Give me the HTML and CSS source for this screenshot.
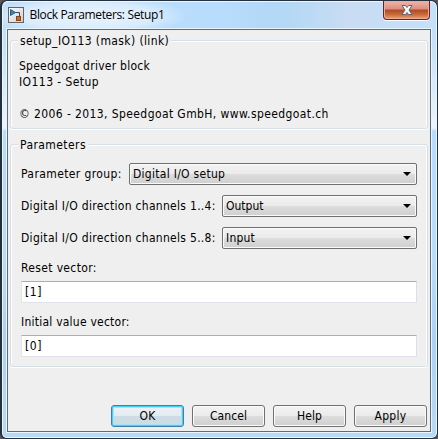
FILE: index.html
```html
<!DOCTYPE html>
<html lang="en">
<head>
<meta charset="utf-8">
<title>Block Parameters: Setup1</title>
<link rel="stylesheet" href="styles.css">
</head>
<body>
<main class="window">
  <header class="titlebar">
    <svg class="app-icon" width="16" height="16" viewBox="0 0 16 16">
      <defs><linearGradient id="paper" x2="1" y2="1"><stop offset="0" stop-color="#fff"/><stop offset="1" stop-color="#cbcbcb"/></linearGradient></defs>
      <rect x=".5" y=".5" width="15" height="15" fill="url(#paper)" stroke="#65625f"/>
      <path d="M7 5.500h4.500V9" fill="none" stroke="#354758"/>
      <path d="M2.500 2.500 7.500 5.500 2.500 8.500Z" fill="#3c83bd" stroke="#245f92"/>
      <rect x="8.500" y="9.500" width="4" height="4" fill="#c8692b" stroke="#84451f"/>
    </svg>
    <h1 class="title">Block Parameters: Setup1</h1>
    <button class="close" aria-label="Close">
      <svg width="12" height="12" viewBox="0 0 12 12"><path d="M1 1.500H4.500L6 3.500 7.500 1.500H11L8 6 11 10.500H7.500L6 8.500 4.500 10.500H1L4 6Z" fill="#f8f8f8" stroke="#5c6573"/></svg>
    </button>
  </header>
  <section class="client">
    <section class="group mask">
      <h2 class="legend"><span class="t-mask">setup_IO113 (mask) (link)</span></h2>
      <p class="t-driver">Speedgoat driver block</p>
      <p class="t-setup">IO113 - Setup</p>
      <p class="copyright">© 2006 - 2013, Speedgoat GmbH, www.speedgoat.ch</p>
    </section>
    <section class="group params">
      <h2 class="legend"><span class="t-params">Parameters</span></h2>
      <div class="row"><span class="label t-group">Parameter group:</span><div class="select"><span class="t-io">Digital I/O setup</span><i class="arrow"></i></div></div>
      <div class="row"><span class="label t-dir">Digital I/O direction channels 1..4:</span><div class="select"><span class="t-output">Output</span><i class="arrow"></i></div></div>
      <div class="row"><span class="label t-dir">Digital I/O direction channels 5..8:</span><div class="select"><span class="t-input">Input</span><i class="arrow"></i></div></div>
      <div class="field"><span class="label t-reset">Reset vector:</span><div class="input">[1]</div></div>
      <div class="field"><span class="label t-initial">Initial value vector:</span><div class="input">[0]</div></div>
    </section>
    <footer class="actions">
      <button class="button primary">OK</button>
      <button class="button">Cancel</button>
      <button class="button">Help</button>
      <button class="button apply">Apply</button>
    </footer>
  </section>
</main>
</body>
</html>
```
FILE: styles.css
```css
* { box-sizing: border-box; }
html { background: #5b5355; }
body {
  margin: 0;
  font: 12px/16px "DejaVu Sans Condensed", "DejaVu Sans", sans-serif;
  font-stretch: condensed;
  color: #000;
  white-space: nowrap;
}
h1, h2, p { margin: 0; font-size: inherit; font-weight: normal; }
.window {
  width: 438px;
  height: 439px;
  padding: 0 6px 5px 5px;
  border: 1px solid #24303e;
  border-left-width: 2px;
  border-radius: 7px 7px 6px 6px;
  box-shadow: inset 0 0 0 1px #e8f8ff;
  background: linear-gradient(180deg, #b9dafa 0, #c9e2fa 50px, #eef4fc 127px, #b7dcff 130px, #b9dcfb 260px, #acd1f3 340px, #b9daf6 100%);
}
.titlebar {
  display: flex;
  height: 28px;
  margin: 0 -5px 0 -4px;
  padding: 0 6px 0 5px;
  border-top: 1px solid #e8f8ff;
  border-radius: 6px 6px 0 0;
  background:
    radial-gradient(ellipse 100px 20px at 85px 14px, #e9f4fd 0, #e1f0fdcc 65%, #d5eafd00 100%),
    linear-gradient(90deg, #c1ddf8 0, #b7dcfd 50%, #b3d8f5 65%, #c9dcf3 80%, #c4e0fa 100%);
}
.app-icon { margin: 5px 0 0; }
.title {
  margin: 4px 0 0 5.5px;
  font: 12px/18px "Open Sans", sans-serif;
  letter-spacing: -.36px;
}
.close {
  display: grid;
  place-items: center;
  width: 47px;
  height: 19px;
  margin: -1px 0 0 auto;
  padding: 0;
  border: 1px solid #62242b;
  border-top: 0;
  border-radius: 0 0 4px 4px;
  background: linear-gradient(#eeb8ad 0, #dc8c7b 45%, #ad472d 50%, #c86b35 75%, #eba576 100%);
  box-shadow: inset 0 0 0 1px #f2aa98, 0 1px 1px #fff;
}
.client {
  height: 403px;
  padding: 9px 2px 0;
  border: 1px solid #596d7b;
  box-shadow: 0 0 0 1px #e8f7ff;
  background: #efefef;
}
.group {
  border: 1px solid #d5dfe5;
  border-radius: 3px;
  box-shadow: inset 1px 1px #fff, 0 1px #fff, inset -1px 0 #fff;
}
.legend { height: 16px; margin: -8px 0 0 7px; }
.legend span { display: inline-block; padding: 0 2px; background: #efefef; }
.mask { height: 89px; margin-top: 1px; }
.mask p { margin-left: 8px; }
.mask .t-driver { margin-top: 9px; }
.mask .copyright { margin-top: 16px; }
.t-mask { letter-spacing: .38px; }
.t-driver { letter-spacing: .25px; }
.t-setup { letter-spacing: .43px; }
.copyright { letter-spacing: .4px; }
.t-params { letter-spacing: .42px; }
.t-group { letter-spacing: .4px; }
.t-dir { letter-spacing: .3px; }
.t-io { letter-spacing: .28px; }
.t-input { letter-spacing: .2px; }
.t-reset { letter-spacing: .35px; }
.t-initial { letter-spacing: .23px; }
.params { height: 223px; margin-top: 15px; padding: 0 10px; }
.params .legend { margin-left: -3px; margin-bottom: 10px; }
.row { display: flex; justify-content: space-between; height: 22px; margin-bottom: 10px; }
.label { line-height: 22px; }
.select {
  display: flex;
  align-items: center;
  justify-content: space-between;
  width: 195px;
  padding: 0 5px 0 3px;
  border: 1px solid #707070;
  border-radius: 2px;
  background: linear-gradient(#f3f3f3 0, #ebebeb 49%, #dddddd 51%, #cfcfcf 100%);
  box-shadow: inset 0 0 0 1px #fafafa;
}
.row:nth-of-type(1) .select { width: 288px; }
.arrow { border: 4px solid transparent; border-top-color: #000; border-bottom: 0; }
.field { height: 54px; }
.field .label { display: block; height: 22px; line-height: 18px; }
.input {
  height: 22px;
  padding: 2px 3px;
  border: 1px solid #e2e3ea;
  border-top-color: #abadb3;
  border-right-color: #dbdfe6;
  border-radius: 1px;
  background: #fff;
  letter-spacing: .6px;
}
.actions { display: flex; justify-content: flex-end; gap: 8px; margin: 38px 1px 0 0; }
.button {
  width: 73px;
  height: 22px;
  padding: 0;
  border: 1px solid #707070;
  border-radius: 3px;
  background: linear-gradient(#f3f3f3 0, #ebebeb 49%, #dddddd 51%, #cfcfcf 100%);
  box-shadow: inset 0 0 0 1px #fbfbfb;
  font: inherit;
  letter-spacing: .1px;
  color: #000;
}
.apply { letter-spacing: .3px; }
.primary {
  border-color: #3c7fb1;
  background: linear-gradient(#edf3f7 0, #e3ebf1 49%, #ccdbe4 51%, #cfdce3 100%);
  box-shadow: inset 0 0 0 1px #48d0fa, inset 0 0 0 2px #a7e2f5;
}
```
